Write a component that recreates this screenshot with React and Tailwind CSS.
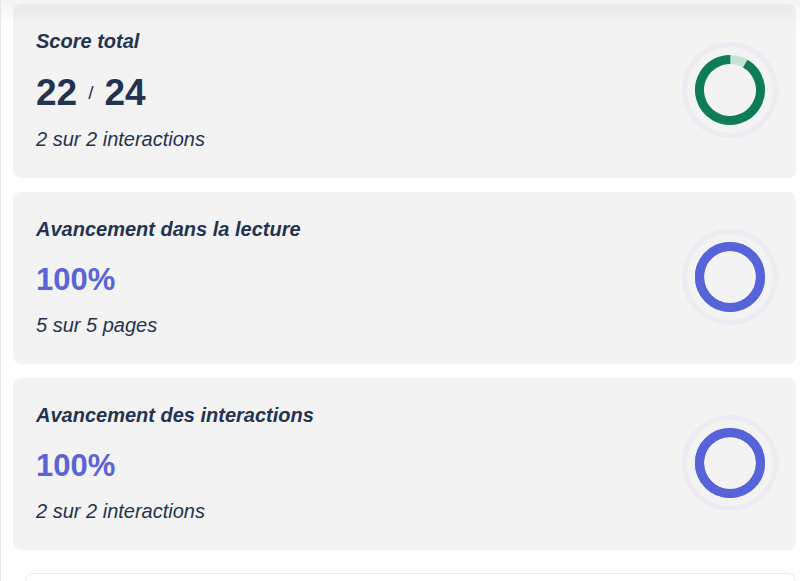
import React from 'react';

const Ring = ({ value, total, color, track }) => {
  const r = 30.5;
  const c = 2 * Math.PI * r;
  const done = (value / total) * c;
  const startDeg = -90 + (1 - value / total) * 360;
  return (
    <svg width="96" height="96" viewBox="0 0 96 96" className="shrink-0">
      <circle cx="48" cy="48" r="45.5" fill="none" stroke="#ebebf1" strokeWidth="5" />
      <circle cx="48" cy="48" r={r} fill="none" stroke={track} strokeWidth="9" />
      <circle
        cx="48"
        cy="48"
        r={r}
        fill="none"
        stroke={color}
        strokeWidth="9"
        strokeDasharray={`${done} ${c}`}
        transform={`rotate(${startDeg} 48 48)`}
      />
    </svg>
  );
};

const StatCard = ({ title, children, subtitle, ring }) => (
  <div className="flex items-center justify-between rounded-lg bg-[#f3f3f3] pl-[23px] pr-[18px] pt-[23px] pb-[25px]">
    <div>
      <h3 className="text-[20px] leading-[28px] font-bold italic text-[#233350]">{title}</h3>
      <div className="mt-[17px]">{children}</div>
      <p className="mt-[11px] text-[20px] leading-[28px] italic text-[#233350]">{subtitle}</p>
    </div>
    {ring}
  </div>
);

export default function App() {
  return (
    <div
      className="relative h-[581px] overflow-hidden bg-white border-l border-[#e6e6e6] pl-[12px] pr-[4px] pt-[4px]"
      style={{ fontFamily: '"Liberation Sans", Arial, sans-serif' }}
    >
      <div className="pointer-events-none absolute inset-x-0 top-0 h-[26px] bg-gradient-to-b from-black/[0.045] to-transparent" />
      <div className="flex flex-col gap-[14px]">
        <StatCard
          title="Score total"
          subtitle="2 sur 2 interactions"
          ring={<Ring value={22} total={24} color="#0e7c56" track="#c6e2d5" />}
        >
          <div className="flex h-[42px] items-center gap-[11px] text-[#233350]">
            <span className="text-[37px] leading-[42px] font-bold">22</span>
            <span className="text-[19px] leading-[20px]">/</span>
            <span className="text-[37px] leading-[42px] font-bold">24</span>
          </div>
        </StatCard>

        <StatCard
          title="Avancement dans la lecture"
          subtitle="5 sur 5 pages"
          ring={<Ring value={1} total={1} color="#5763d8" track="#5763d8" />}
        >
          <div className="text-[31px] leading-[40px] font-bold text-[#5a64d6]">100%</div>
        </StatCard>

        <StatCard
          title="Avancement des interactions"
          subtitle="2 sur 2 interactions"
          ring={<Ring value={2} total={2} color="#5763d8" track="#5763d8" />}
        >
          <div className="text-[31px] leading-[40px] font-bold text-[#5a64d6]">100%</div>
        </StatCard>
      </div>

      <div className="ml-[12px] mt-[23px] h-[80px] rounded-lg border border-[#e8e8e8] bg-white" />
    </div>
  );
}
